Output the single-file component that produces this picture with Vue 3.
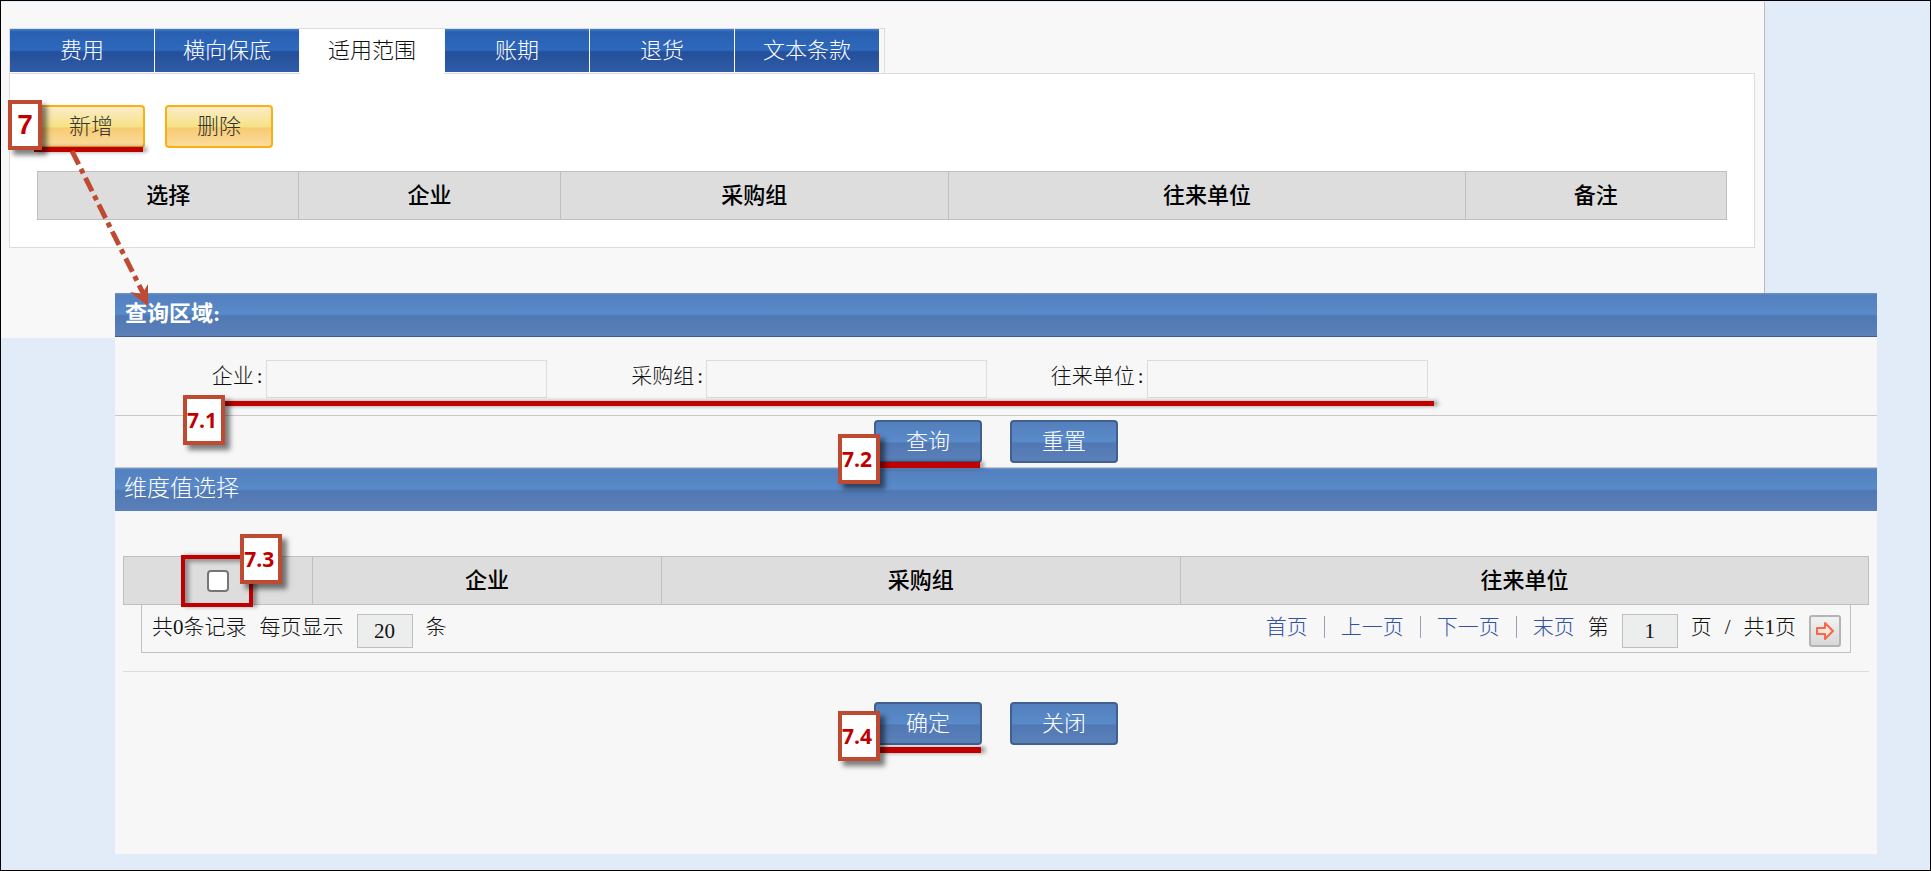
<script setup>
import { ref } from 'vue'

const tabs = ['费用', '横向保底', '适用范围', '账期', '退货', '文本条款']
const activeTab = ref('适用范围')

const scopeColumns = [
  { label: '选择', cls: 'w-scope-s' },
  { label: '企业', cls: 'w-scope-s' },
  { label: '采购组', cls: 'w-scope-m' },
  { label: '往来单位', cls: 'w-scope-l' },
  { label: '备注', cls: 'w-scope-s' },
]

const filters = ref([
  { id: 'company', label: '企业', value: '' },
  { id: 'group', label: '采购组', value: '' },
  { id: 'partner', label: '往来单位', value: '' },
])

const allChecked = ref(false)
const pageSize = ref('20')
const pageNo = ref('1')
const pageLinks = ['首页', '上一页', '下一页', '末页']

function resetFilters() {
  filters.value.forEach((f) => (f.value = ''))
}
</script>

<template>
  <div class="page">
    <section class="contract">
      <nav class="tabs">
        <button
          v-for="tab in tabs"
          :key="tab"
          type="button"
          class="tab"
          :class="{ active: tab === activeTab }"
          @click="activeTab = tab"
        >{{ tab }}</button>
      </nav>
      <div class="tab-body">
        <div class="toolbar">
          <div class="marked">
            <button type="button" class="btn gold">新增</button>
            <span class="underline under-add"></span>
            <span class="step step-7">7</span>
            <svg class="arrow" width="90" height="162" viewBox="0 0 90 162" aria-hidden="true">
              <path d="M5 3 L76 145" fill="none" stroke="#bf4a32" stroke-width="5" stroke-dasharray="15 5 5 5" />
              <path d="M81 158 L63 144 L75 146 L81 136 Z" fill="#bf4a32" />
            </svg>
          </div>
          <button type="button" class="btn gold">删除</button>
        </div>
        <table class="grid">
          <thead>
            <tr>
              <th v-for="col in scopeColumns" :key="col.label" :class="col.cls">{{ col.label }}</th>
            </tr>
          </thead>
        </table>
      </div>
    </section>

    <section class="dialog">
      <h2 class="bar bar-query">查询区域:</h2>
      <form class="query" @submit.prevent>
        <div class="filters">
          <div v-for="f in filters" :key="f.id" class="field">
            <label :for="f.id">{{ f.label }}<span class="colon">:</span></label>
            <input :id="f.id" v-model="f.value" type="text" />
          </div>
          <span class="underline under-filters"></span>
          <span class="step step-71">7.1</span>
        </div>
        <div class="actions">
          <div class="marked">
            <button type="submit" class="btn blue">查询</button>
            <span class="underline under-search"></span>
            <span class="step step-72">7.2</span>
          </div>
          <button type="button" class="btn blue" @click="resetFilters">重置</button>
        </div>
      </form>

      <h2 class="bar bar-values">维度值选择</h2>
      <div class="values">
        <table class="grid">
          <thead>
            <tr>
              <th class="w-check">
                <span class="check-wrap">
                  <input v-model="allChecked" type="checkbox" aria-label="选择" />
                  <span class="check-frame"></span>
                  <span class="step step-73">7.3</span>
                </span>
              </th>
              <th class="w-company">企业</th>
              <th class="w-group">采购组</th>
              <th>往来单位</th>
            </tr>
          </thead>
        </table>
        <div class="pager">
          <div class="pager-part">
            <span>共0条记录</span>
            <label for="page-size">每页显示</label>
            <input id="page-size" v-model="pageSize" type="text" />
            <span>条</span>
          </div>
          <div class="pager-part">
            <div class="links">
              <a v-for="link in pageLinks" :key="link" href="#" @click.prevent>{{ link }}</a>
            </div>
            <label for="page-no">第</label>
            <input id="page-no" v-model="pageNo" type="text" />
            <span>页</span>
            <span>/</span>
            <span>共1页</span>
            <button type="button" class="go" aria-label="跳转">
              <svg width="20" height="20" viewBox="0 0 20 20" aria-hidden="true">
                <path d="M2 7 H10 V2 L18 10 L10 18 V13 H2 Z" fill="#fde3dc" stroke="#f4694a" stroke-width="2" stroke-linejoin="round" />
              </svg>
            </button>
          </div>
        </div>
      </div>
      <div class="confirm">
        <div class="marked">
          <button type="button" class="btn blue">确定</button>
          <span class="underline under-ok"></span>
          <span class="step step-74">7.4</span>
        </div>
        <button type="button" class="btn blue">关闭</button>
      </div>
    </section>
  </div>
</template>

<style>
body {
  margin: 0;
  background: #e2ecf8;
}
</style>

<style scoped>
.page {
  box-sizing: border-box;
  min-height: 100vh;
  padding: 1px 0 15px;
  border: 1px solid #000;
  background: #e2ecf8;
  color: #111;
  font: 300 22px/24px "Liberation Serif", "Noto Sans CJK SC", serif;
}
button,
input {
  box-sizing: border-box;
  margin: 0;
  font: inherit;
  color: inherit;
}
button {
  cursor: pointer;
}

/* contract panel */
.contract {
  margin-right: 165px;
  padding: 26px 9px 90px 8px;
  border-right: 1px solid #bbb;
  background: #f8f8f8;
}
.tabs {
  position: relative;
  display: flex;
  gap: 1px;
  width: fit-content;
  padding-right: 5px;
  border: 1px solid #ddd;
  border-bottom: 0;
}
.tab {
  width: 144px;
  height: 43px;
  margin-bottom: 1px;
  padding: 0;
  border: 0;
  background: linear-gradient(#3f7fd0 0, #2a5fb0 3px, #2d69bd 21px, #244f9a 23px, #2f5ca8 100%);
  color: #fff;
}
.tab.active {
  height: 45px;
  margin-bottom: -1px;
  padding-bottom: 2px;
  background: #fff;
  color: #111;
}
.tab-body {
  padding: 31px 27px 27px;
  border: 1px solid #ddd;
  background: #fff;
}
.toolbar {
  display: flex;
  gap: 20px;
  margin-bottom: 23px;
}
.marked {
  position: relative;
}
.btn {
  display: block;
  width: 108px;
  height: 43px;
  padding: 0;
  border-radius: 4px;
}
.gold {
  border: 2px solid #fbb012;
  background: linear-gradient(#fbecc8 0, #f6e287 50%, #f8cb72 54%, #fadc9d 100%);
  color: #333;
}
.blue {
  border: 2px solid #40608f;
  background: linear-gradient(#5480bd 0, #598ac9 50%, #5078b2 54%, #5b80ba 100%);
  color: #fff;
}

/* tables */
.grid {
  width: 100%;
  border-collapse: collapse;
  table-layout: fixed;
}
.grid th {
  height: 47px;
  padding: 0;
  border: 1px solid #bfbfbf;
  background: #ddd;
  color: #000;
  font-weight: 500;
}
.w-scope-s { width: 15.45%; }
.w-scope-m { width: 23%; }
.w-scope-l { width: 30.6%; }
.w-check { width: 10.8%; }
.w-company { width: 19.9%; }
.w-group { width: 29.7%; }

/* dialog */
.dialog {
  position: relative;
  margin: -45px 53px 0 114px;
  padding-bottom: 109px;
  background: #f7f7f7;
}
.bar {
  box-sizing: border-box;
  height: 44px;
  margin: 0;
  color: #fff;
  line-height: 42px;
  background: linear-gradient(#7098d2 0, #5480bf 2px, #598ac9 21px, #5078b2 23px, #5b80ba 100%);
}
.bar-query {
  padding-left: 10px;
  border-bottom: 1px solid #3f5b8c;
  font-size: 22px;
  font-weight: 700;
}
.bar-values {
  padding-left: 9px;
  border-top: 1px solid #c4c8c8;
  font-size: 23px;
  font-weight: 300;
}
.filters {
  position: relative;
  display: grid;
  grid-template-columns: repeat(4, 1fr);
  padding: 23px 0 17px;
  border-bottom: 1px solid #c8c8c8;
  font-size: 21px;
}
.field {
  display: flex;
  padding-right: 9px;
}
.field label {
  flex: 1;
  padding-right: 3px;
  line-height: 32px;
  text-align: right;
}
.colon {
  padding-left: 3px;
}
.field input {
  width: 281px;
  height: 38px;
  padding: 0 6px;
  border: 1px solid #ddd;
  background: #f7f7f7;
}
.actions,
.confirm {
  display: flex;
  justify-content: center;
  gap: 28px;
}
.actions {
  padding: 4px 0;
}
.values {
  margin: 0 8px;
  padding: 45px 0 18px;
  border-bottom: 1px solid #ddd;
}
.confirm {
  padding-top: 30px;
}
.check-wrap {
  position: relative;
  display: block;
  width: 22px;
  height: 22px;
  margin: 0 auto;
}
.grid input[type="checkbox"] {
  display: block;
  width: 22px;
  height: 22px;
  appearance: none;
  border: 2px solid #767676;
  border-radius: 4px;
  background: #fff;
}
.grid input[type="checkbox"]:checked {
  background: #3f7fd0;
}

/* pager */
.pager {
  display: flex;
  justify-content: space-between;
  margin: 0 18px;
  padding: 0 9px 0 10px;
  border: 1px solid #bfbfbf;
  border-top: 0;
  font-size: 21px;
}
.pager-part {
  display: flex;
  gap: 13px;
  height: 47px;
  line-height: 44px;
}
.pager input {
  width: 56px;
  height: 34px;
  margin-top: 9px;
  padding: 0;
  border: 1px solid #bfbfbf;
  background: #ebeeed;
  text-align: center;
}
.links {
  display: flex;
  align-items: center;
  height: 44px;
}
.links a {
  padding: 0 16px;
  border-left: 1px solid #9aa0b4;
  color: #3352a0;
  line-height: 22px;
  text-decoration: none;
}
.links a:first-child {
  border-left: 0;
}
.links a:last-child {
  padding-right: 0;
}
.go {
  display: grid;
  place-items: center;
  width: 32px;
  height: 32px;
  margin-top: 10px;
  padding: 0;
  border: 2px solid #b4b4b4;
  border-radius: 3px;
  background: linear-gradient(#f2f2f2, #d8d8d8);
}

/* guide marks laid over the form */
.step {
  box-sizing: border-box;
  position: absolute;
  z-index: 3;
  width: 42px;
  height: 50px;
  border: 4px solid #bf4a32;
  background: #fff;
  box-shadow: 5px 5px 5px rgba(0, 0, 0, 0.5);
  color: #c00000;
  font: 700 21px/42px "Open Sans", "Noto Sans", sans-serif;
  text-align: left;
}
.step-7 {
  top: -5px;
  left: -29px;
  width: 34px;
  font-family: "Liberation Sans", sans-serif;
  font-size: 28px;
  text-align: center;
}
.step-71 { top: 58px; left: 68px; }
.step-72 { top: 14px; left: -36px; }
.step-73 { top: -36px; left: 33px; }
.step-74 { top: 9px; left: -36px; }
.underline {
  position: absolute;
  z-index: 2;
  height: 5px;
  background: #c00000;
  box-shadow: 4px 0 4px rgba(0, 0, 0, 0.4);
}
.under-add { top: 42px; left: -3px; right: 2px; }
.under-filters { top: 64px; left: 108px; width: calc(75% - 111px); }
.under-search { top: 42px; left: 3px; right: 2px; height: 6px; }
.under-ok { top: 45px; left: 3px; right: 1px; height: 6px; }
.check-frame {
  box-sizing: border-box;
  position: absolute;
  z-index: 2;
  top: -15px;
  left: -26px;
  width: 72px;
  height: 52px;
  border: 4px solid #c00000;
  box-shadow: 4px 0 4px rgba(0, 0, 0, 0.35), inset 4px 3px 4px rgba(0, 0, 0, 0.35);
  pointer-events: none;
}
.arrow {
  position: absolute;
  z-index: 4;
  top: 43px;
  left: 30px;
  pointer-events: none;
}
</style>
